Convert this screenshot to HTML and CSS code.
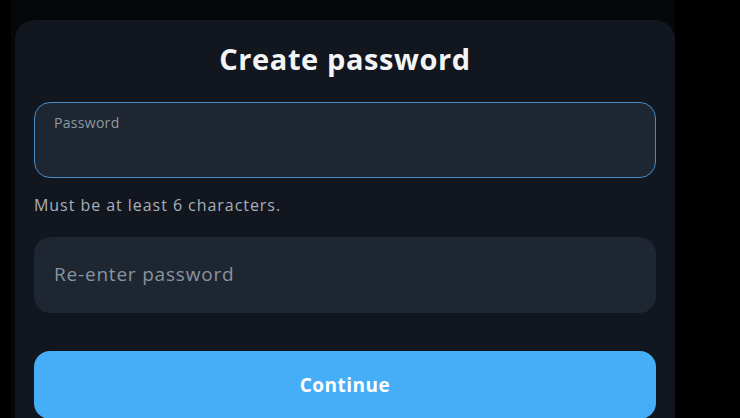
FILE: index.html
```html
<!DOCTYPE html>
<html lang="en">
<head>
<meta charset="utf-8">
<title>Create password</title>
<link rel="stylesheet" href="styles.css">
</head>
<body>
<div class="page">
  <div class="card">
    <h1 class="title">Create password</h1>
    <label class="field field-active">
      <span class="field-label">Password</span>
      <input class="field-input" type="password">
    </label>
    <p class="hint">Must be at least 6 characters.</p>
    <label class="field">
      <input class="field-input placeholder-only" type="password" placeholder="Re-enter password">
    </label>
    <button class="btn" type="button">Continue</button>
  </div>
</div>
</body>
</html>
```
FILE: styles.css
```css
* { box-sizing: border-box; }
html, body { margin: 0; padding: 0; }
body {
  background: #000;
  font-family: "Open Sans", "DejaVu Sans", sans-serif;
  width: 740px;
  height: 418px;
  overflow: hidden;
}
.page {
  margin-left: 11px;
  width: 664px;
  height: 418px;
  background: #05070b;
  padding-top: 20px;
  padding-left: 4px;
  overflow: hidden;
}
.card {
  width: 660px;
  height: 398px;
  background: #11161f;
  border-radius: 20px 20px 0 0;
  padding: 22px 19px 0;
  display: flex;
  flex-direction: column;
  overflow: hidden;
}
.title {
  margin: 0;
  text-align: center;
  color: #f3f4f6;
  font-size: 29px;
  font-weight: 700;
  letter-spacing: 0.6px;
  line-height: 34px;
  height: 60px;
  flex: none;
}
.field {
  display: block;
  flex: none;
  height: 76px;
  border-radius: 16px;
  background: #1e2632;
  border: 1px solid #1e2632;
}
.field-active {
  border-color: #4b8bc2;
}
.field-label {
  display: block;
  padding: 11px 0 0 19px;
  font-size: 14px;
  letter-spacing: 0.3px;
  line-height: 18px;
  color: #8f99a4;
}
.field-input {
  display: block;
  width: 100%;
  background: transparent;
  border: 0;
  outline: none;
  padding: 4px 19px;
  font-family: inherit;
  font-size: 19px;
  color: #e5e7eb;
}
.placeholder-only {
  height: 72px;
  padding: 0 19px;
  letter-spacing: 0.8px;
}
.placeholder-only::placeholder {
  color: #8a939e;
  opacity: 1;
}
.hint {
  flex: none;
  margin: 16px 0 21px;
  font-size: 16px;
  letter-spacing: 0.95px;
  line-height: 22px;
  color: #a8b0b9;
}
.btn {
  flex: none;
  margin-top: 38px;
  height: 68px;
  border: 0;
  border-radius: 16px;
  background: #46aef6;
  color: #fff;
  font-family: inherit;
  font-size: 19px;
  font-weight: 700;
  letter-spacing: 0.5px;
  padding: 0;
}
```
